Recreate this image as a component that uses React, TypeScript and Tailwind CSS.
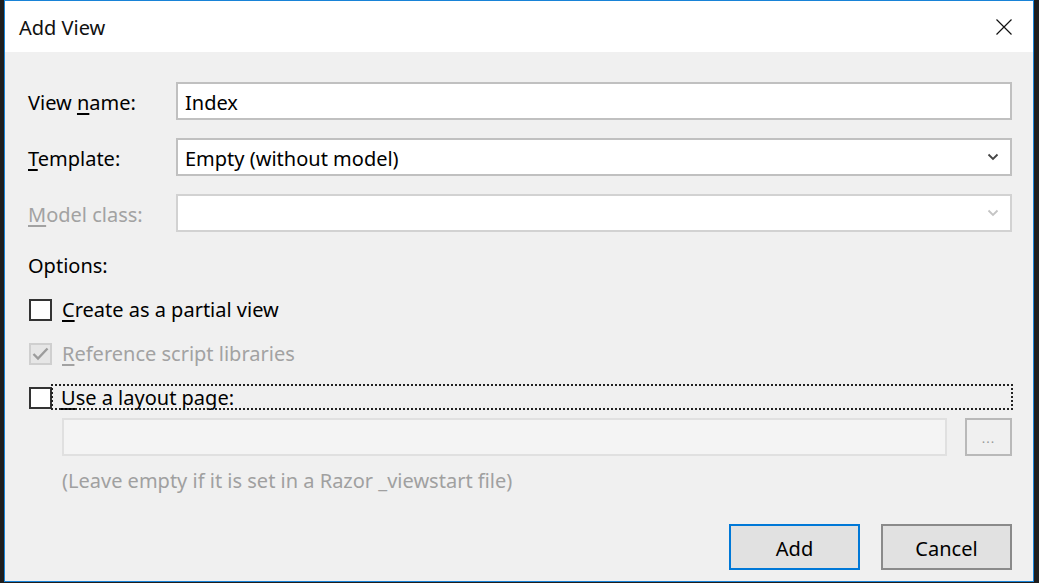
import React from "react";

const font = { fontFamily: '"Noto Sans", "Open Sans", sans-serif' };

function Chevron({ color }: { color: string }) {
  return (
    <svg width="12" height="8" viewBox="0 0 12 8" className="shrink-0">
      <path d="M1.5 1.5 L6 6 L10.5 1.5" fill="none" stroke={color} strokeWidth="1.8" />
    </svg>
  );
}

function Box({ checked, disabled }: { checked?: boolean; disabled?: boolean }) {
  return (
    <div
      className={
        "w-[23px] h-[22px] shrink-0 border-2 flex items-center justify-center " +
        (disabled ? "border-[#cfcfcf] bg-[#e6e6e6]" : "border-[#333333] bg-white")
      }
    >
      {checked && (
        <svg width="17" height="14" viewBox="0 0 17 14">
          <path d="M1.5 7 L6 11.5 L15.5 1.5" fill="none" stroke="#9c9c9c" strokeWidth="2.4" />
        </svg>
      )}
    </div>
  );
}

export default function App() {
  return (
    <div className="w-[1039px] h-[583px] bg-[#1e1e1e] pl-[4px] pr-[5px] pb-[1px]" style={font}>
      <div className="w-full h-full border border-[#1883d7] flex flex-col bg-[#f0f0f0] text-[20px] text-black leading-none">
        <div className="h-[51px] bg-white flex items-center pl-[14px] pr-[21px] shrink-0">
          <span className="text-[20px] text-[#111] pt-[2px]">Add View</span>
          <div className="flex-1" />
          <svg width="16" height="16" viewBox="0 0 16 16">
            <path d="M0.5 0.5 L15.5 15.5 M15.5 0.5 L0.5 15.5" stroke="#111" strokeWidth="1.2" />
          </svg>
        </div>
        <div className="flex flex-col pl-[23px] pr-[21px] pt-[30px]">
          <div className="flex items-center h-[38px]">
            <div className="w-[148px] shrink-0 pt-[4px]">
              View <span className="underline underline-offset-[3px]">n</span>ame:
            </div>
            <div className="flex-1 h-full border-2 border-[#c0c0c0] bg-white flex items-center pl-[7px] pt-[4px]">
              Index
            </div>
          </div>
          <div className="flex items-center h-[38px] mt-[18px]">
            <div className="w-[148px] shrink-0 pt-[4px]">
              <span className="underline underline-offset-[3px]">T</span>emplate:
            </div>
            <div className="flex-1 h-full border-2 border-[#c0c0c0] bg-white flex items-center pl-[7px] pr-[11px]">
              <span className="flex-1 pt-[4px]">Empty (without model)</span>
              <Chevron color="#444" />
            </div>
          </div>
          <div className="flex items-center h-[38px] mt-[18px]">
            <div className="w-[148px] shrink-0 text-[#a2a2a2] pt-[4px]">
              <span className="underline underline-offset-[3px]">M</span>odel class:
            </div>
            <div className="flex-1 h-full border-2 border-[#d2d2d2] bg-white flex items-center justify-end pr-[11px]">
              <Chevron color="#c4c4c4" />
            </div>
          </div>
          <div className="mt-[24px] h-[20px] flex items-center">Options:</div>
          <div className="mt-[23px] flex items-center h-[22px] pl-[1px]">
            <Box />
            <span className="ml-[10px]">
              <span className="underline underline-offset-[3px]">C</span>reate as a partial view
            </span>
          </div>
          <div className="mt-[22px] flex items-center h-[22px] pl-[1px]">
            <Box checked disabled />
            <span className="ml-[10px] text-[#a2a2a2]">
              <span className="underline underline-offset-[3px]">R</span>eference script libraries
            </span>
          </div>
          <div className="mt-[22px] flex items-center h-[22px] pl-[1px]">
            <Box />
            <div className="relative flex-1 h-[22px] ml-[-1px] flex items-center">
              <div className="absolute left-0 right-[-1px] top-[-3px] bottom-[-1px] border-2 border-dotted border-[#222]" />
              <span className="ml-[10px]">
                <span className="underline underline-offset-[3px]">U</span>se a layout page:
              </span>
            </div>
          </div>
          <div className="mt-[9px] flex items-center h-[38px] pl-[34px]">
            <div className="flex-1 h-full border-2 border-[#e0e0e0] bg-[#f4f4f4]" />
            <div className="ml-[18px] w-[47px] h-full border-2 border-[#b9b9b9] bg-[#f0f0f0] flex items-end justify-center pb-[9px] text-[13px] text-[#999] tracking-[1px]">
              ...
            </div>
          </div>
          <div className="mt-[15px] pl-[34px] text-[#a0a0a0] h-[20px] flex items-center">
            (Leave empty if it is set in a Razor _viewstart file)
          </div>
          <div className="mt-[33px] flex justify-end gap-[21px]">
            <div className="w-[131px] h-[46px] border-2 border-[#0078d7] bg-[#e1e1e1] flex items-center justify-center pt-[3px]">
              Add
            </div>
            <div className="w-[131px] h-[46px] border-2 border-[#8a8a8a] bg-[#e1e1e1] flex items-center justify-center pt-[3px]">
              Cancel
            </div>
          </div>
        </div>
      </div>
    </div>
  );
}
